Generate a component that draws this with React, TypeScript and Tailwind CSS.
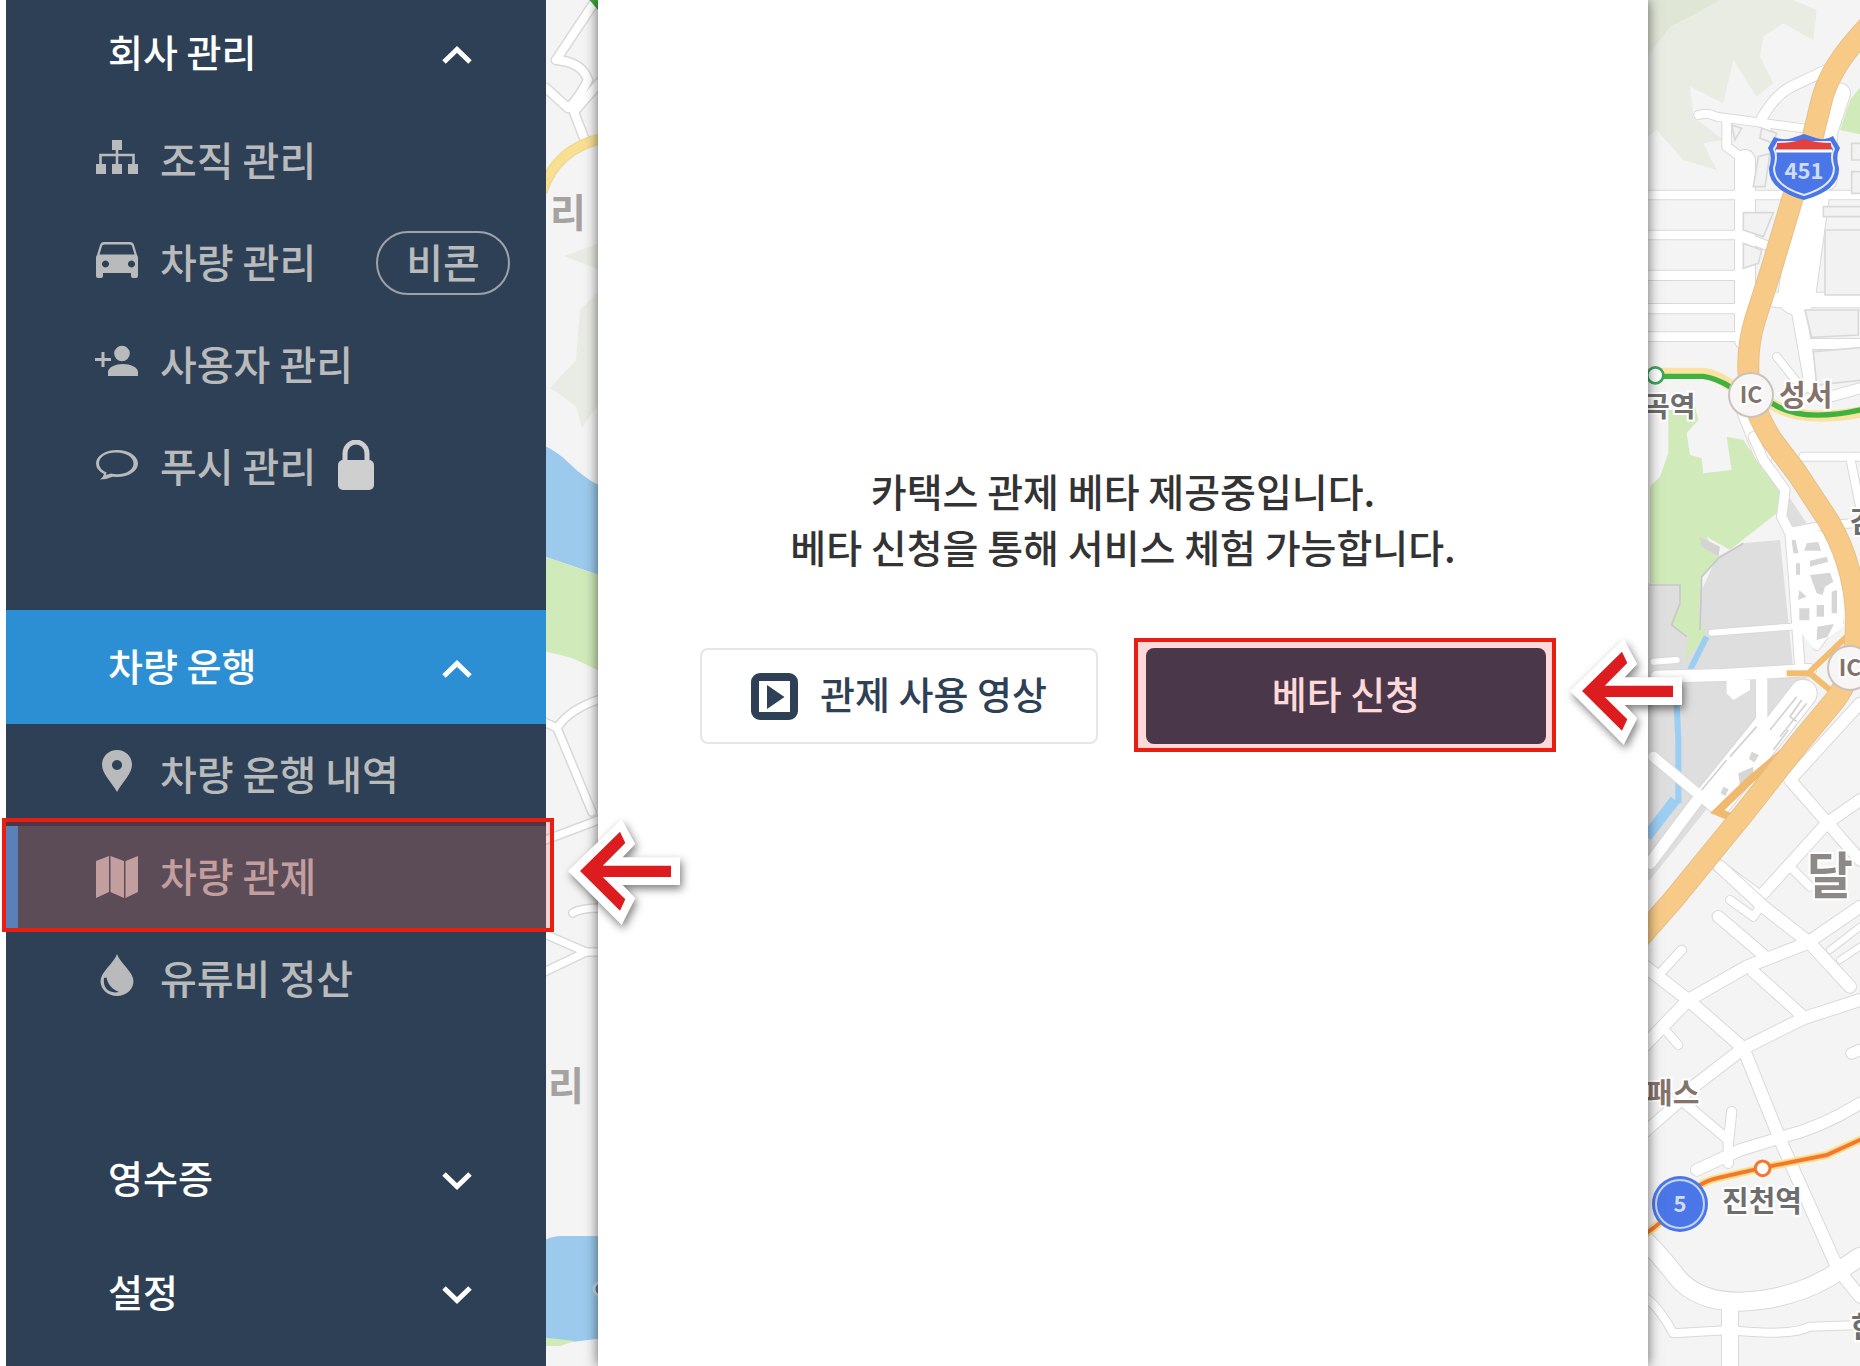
import type { ReactNode } from "react";
import clsx from "clsx";

type Road = [d: string, width: number];

function Roads({ roads, edge = 6 }: { roads: Road[]; edge?: number }) {
  return (
    <g fill="none" strokeLinecap="round" strokeLinejoin="round">
      {roads.map(([d, w]) => (
        <path key={d} d={d} stroke="#d9d9d9" strokeWidth={w + edge} />
      ))}
      {roads.map(([d, w]) => (
        <path key={d} d={d} stroke="#fff" strokeWidth={w} />
      ))}
    </g>
  );
}

const westRoads: Road[] = [
  ["M596 0 L556 60 Q582 62 588 80 Q578 100 568 108 M546 88 L568 108", 8],
  ["M600 82 L574 112 L584 138", 8],
  ["M604 698 Q570 708 557 728 L592 812", 7],
  ["M540 720 L557 728", 7],
  ["M540 842 L604 818", 7],
  ["M540 932 L586 952 L540 974", 7],
  ["M573 913 Q580 908 604 908", 7],
  ["M586 952 H604", 7],
];

const northRoads: Road[] = [
  ["M390 365 Q430 290 480 262 L600 205 L690 100", 30],
  ["M205 345 Q230 335 260 350 L520 385", 24],
  ["M290 365 V440 L345 480", 26],
  ["M345 480 V1020", 60],
  ["M40 585 H690", 26],
  ["M40 705 L330 705 L420 740", 26],
  ["M40 826 H330", 28],
  ["M40 926 H330", 28],
  ["M40 1010 H340", 26],
  ["M440 440 L395 360", 20],
  ["M630 280 L590 400 V540", 60],
  ["M540 600 L500 890", 110],
  ["M500 900 L545 1160", 40],
  ["M440 900 H690", 44],
  ["M530 1032 H690", 30],
  ["M440 1070 L520 1170", 22],
  ["M690 1165 L600 1190", 30],
  ["M330 1190 L400 1370", 50],
];

const centralRoads: Road[] = [
  ["M370 -10 L400 60 L465 150 L455 230 L480 280 L490 400 L510 690", 28],
  ["M510 270 Q600 250 690 250", 24],
  ["M520 50 H690 M660 50 L690 200", 24],
  ["M500 270 L610 400 L620 540 L560 620", 20],
  ["M245 578 L480 560 L630 545", 18],
  ["M70 665 L140 660", 18],
  ["M80 710 L280 705 L540 690", 36],
  ["M395 720 V840 L210 1070 L60 1270", 34],
  ["M520 760 L270 1080", 80],
  ["M70 950 L250 1100", 30],
  ["M690 790 L480 1020 L620 1180 L690 1260", 34],
  ["M690 1080 L590 1150 L400 1360", 34],
  ["M480 1280 L540 1340", 24],
  ["M240 1260 L390 1370", 34],
];

const southRoads: Road[] = [
  ["M270 -100 L400 20 L540 130 L660 260", 36],
  ["M390 20 L370 50 L300 0", 24],
  ["M265 50 L400 165", 34],
  ["M20 180 L175 300 L340 445 L455 730 L625 1110 L690 1190", 36],
  ["M155 150 L95 215", 26],
  ["M40 440 L175 300 L350 200 L530 130 L690 20", 36],
  ["M370 215 L520 350", 34],
  ["M110 395 L145 435", 24],
  ["M190 560 L340 445 L520 355 L690 300", 36],
  ["M665 460 L690 450", 32],
  ["M200 810 L330 750 L455 712 Q580 680 690 610", 34],
  ["M165 610 L295 720 L295 790 M305 635 L295 730", 28],
  ["M40 700 L165 590", 32],
  ["M570 110 L690 20 M600 150 L690 80 M630 180 L690 140", 18],
  ["M20 1000 Q70 1040 140 1130 Q200 1205 330 1205 Q480 1200 600 1130 L690 1070", 54],
  ["M300 1210 V1400", 48],
  ["M40 1190 Q80 1210 130 1300 L300 1290 Q480 1310 540 1280 L690 1275", 24],
];

const expressway =
  "M1872 22 L1856 40 Q1828 72 1821 103 L1812 140 L1792 200 L1772 267 L1755 320 Q1746 350 1749 380 Q1752 408 1772 440 L1797 473 L1828 520 Q1852 560 1856 610 Q1858 670 1835 700 L1800 742 L1745 812 L1673 900 L1636 942";

function CityMap() {
  return (
    <svg
      className="absolute inset-0 size-full"
      viewBox="0 0 1860 1366"
      preserveAspectRatio="xMaxYMin slice"
      fontFamily='"Noto Sans CJK KR", sans-serif'
      fontWeight="700"
    >
      <rect width="1860" height="1366" fill="#f4f4f4" />

      {/* river side */}
      <path d="M600 243 L564 256 L600 270Z M600 290 L580 310 L576 360 L550 388 L562 396 L576 406 L582 428 L600 402Z" fill="#e9ece4" />
      <path d="M540 444 Q556 450 570 464 T602 487 V576 L540 555Z" fill="#9ccaed" />
      <path d="M540 555 L602 576 V672 L572 658 L540 650Z" fill="#d0eab9" />
      <Roads roads={westRoads} edge={3} />
      <path d="M542 192 Q556 148 604 138" fill="none" stroke="#eed996" strokeWidth="11" />
      <path d="M542 192 Q556 148 604 138" fill="none" stroke="#f9df92" strokeWidth="8" />
      <path d="M590 -4 L602 10" stroke="#3ba53b" strokeWidth="6" />
      <path d="M540 1242 Q552 1236 560 1236 H604 V1338 L572 1342 L540 1338Z" fill="#9ccaed" />
      <path d="M540 1337 L575 1341 L560 1346 H540Z" fill="#d0eab9" />
      <circle cx="601" cy="1289" r="7" fill="#6e7f8f" stroke="#c5dcee" strokeWidth="3" />
      <text x="550" y="227" fontSize="39" fill="#a5a2a0">리</text>
      <text x="548" y="1100" fontSize="39" fill="#a5a2a0">리</text>

      <g transform="translate(1630) scale(.33333)">
        <path d="M40 0 H490 L560 30 L550 120 L460 70 L400 110 L390 170 L430 250 L380 290 L310 180 L280 310 L180 260 L190 350 L280 420 L220 430 L260 510 L160 480 L80 390 L40 420Z" fill="#e8ece3" />
        <path d="M40 0 H270 L180 50 L120 80 L60 160 H40Z" fill="#e0e6d6" />
        <path d="M700 250 L660 300 L630 390 L700 405Z" fill="#d0eab9" />
        <Roads roads={northRoads} />
        <g fill="#f2f2f2" stroke="#d9d9d9" strokeWidth="5">
          <path d="M340 638 H430 L400 710 L340 690Z M340 730 L395 750 L385 790 L340 805Z" />
          <path d="M305 375 L335 385 L315 420Z M395 385 L440 400 L430 430 L390 415Z M385 470 L420 460 L405 560 H370Z" />
          <path d="M585 690 H700 V885 H585Z M580 620 H700 V650 H580Z" />
          <path d="M665 430 H700 V480 H665Z M665 515 H700 V580 H665Z" />
          <path d="M525 930 H685 V1005 L545 1012Z M550 1055 L700 1042 V1140 L560 1155Z" />
        </g>
      </g>

      <g transform="translate(1630 440) scale(.33333)">
        <path d="M40 430 H150 L220 440 L260 350 L340 310 L450 300 L490 690 L540 720 L60 1320 H40Z" fill="#dedede" />
        <path d="M470 160 L530 250 L470 265Z" fill="#dedede" />
        <path d="M115 -90 L195 -100 L205 -60 L170 -20 L180 45 L215 55 L220 100 L305 90 L290 -10 L340 0 L400 90 L450 150 L440 220 L350 290 L300 330 L230 290 L265 360 L215 410 L205 520 L230 590 L165 660 L175 590 L120 550 L150 490 L150 435 L60 430 V140 L90 110 L115 40Z" fill="#d0eab9" />
        <path d="M60 435 H150 L150 490 L125 555 L170 590 M340 310 L265 355 L215 410 L210 570" fill="none" stroke="#c8c8c8" strokeWidth="5" />
        <path d="M208 290 L270 320 L265 350 L215 320Z" fill="#d3d3d6" />
        <path d="M230 590 L180 690" stroke="#9ccdf3" strokeWidth="18" />
        <path d="M140 790 L145 900 V1090" fill="none" stroke="#9ccdf3" strokeWidth="18" />
        <path d="M135 1080 L50 1190" fill="none" stroke="#9ccdf3" strokeWidth="32" />
        <Roads roads={centralRoads} />
        <path d="M290 720 H360 V750 L310 780 L290 760Z" fill="#fff" />
        <path d="M485 260 L600 280 L640 400 V560 L550 625 L500 560Z" fill="#fff" />
        <g fill="#d6d6d6">
          <path d="M485 300 h12 l8 40 h-15Z M530 310 l35 -4 l8 26 h-50Z M498 370 h12 v34 h-12Z M540 362 l50 -12 l5 15 l-55 15Z" />
          <path d="M540 405 L600 398 L610 425 L585 440 L578 465 L560 460Z M605 455 l16 -5 v70 h-16Z M508 450 l22 20 l-26 10Z" />
          <path d="M508 505 h30 v36 h-30Z M560 495 h22 v35 h-22Z M562 560 l50 -8 l-20 40 l-32 8Z" />
          <path d="M365 935 l22 10 l-14 22 l-16 -10Z M325 1000 l45 -20 v25 l-40 35Z M280 1040 l16 8 l-10 20 l-14 -8Z" />
        </g>
        <g fill="none" stroke="#d2d2d2" strokeWidth="5">
          <path d="M380 860 L300 950 M500 770 L420 870 M530 790 L450 890 M515 780 L480 830 L500 845" />
          <path d="M475 870 L430 930 M290 960 L215 1050" />
        </g>
        <path d="M470 700 H540 L600 750 M540 695 L650 590" fill="none" stroke="#f3bd70" strokeWidth="18" />
        <path d="M480 920 L360 1020 L262 1115 L300 1130" fill="none" stroke="#efba70" strokeWidth="24" />
      </g>

      <g transform="translate(1630 900) scale(.33333)">
        <Roads roads={southRoads} />
        <path d="M30 1010 Q70 990 120 940 Q190 850 260 835 L400 803 L590 765 L700 715" fill="none" stroke="#fbe08e" strokeWidth="24" />
        <path d="M30 1010 Q70 990 120 940 Q190 850 260 835 L400 803 L590 765 L700 715" fill="none" stroke="#f5772f" strokeWidth="12" />
        <circle cx="398" cy="805" r="22" fill="#fff" stroke="#f5772f" strokeWidth="9" />
        <circle cx="150" cy="912" r="84" fill="#4a76e8" />
        <circle cx="150" cy="912" r="72" fill="none" stroke="#c6d5fa" strokeWidth="6" />
      </g>

      {/* subway line 2 */}
      <g transform="translate(1630) scale(.33333)" fill="none">
        <path d="M70 1120 H220 Q260 1125 300 1155 L430 1215 Q520 1270 700 1235" stroke="#fae3a0" strokeWidth="34" />
        <path d="M70 1129 H220 Q260 1135 300 1160 L430 1212 Q520 1270 700 1228" stroke="#3fb23f" strokeWidth="16" />
        <circle cx="76" cy="1126" r="24" fill="#fff" stroke="#3fa45c" strokeWidth="8" />
      </g>

      {/* expressway */}
      <g fill="none" strokeLinejoin="round">
        <path d={expressway} stroke="#e6c08a" strokeWidth="22" />
        <path d={expressway} stroke="#f7cb87" strokeWidth="20" />
      </g>

      <g transform="translate(1768 134)">
        <path d="M6 3 Q16 7 24 4 L36 0 L48 4 Q57 7 65 2 L72 14 Q67 22 71 34 Q72 56 36 66 Q0 56 1 34 Q5 22 0 14Z" fill="#4a76e8" />
        <path d="M10 8 H62 L66 15 Q62 22 66 34 Q66 52 36 61 Q6 52 6 34 Q10 22 6 15Z" fill="none" stroke="#e3eafc" strokeWidth="2" />
        <path d="M9 9 Q24 9 36 5 Q48 9 63 9 V16 H9Z" fill="#e4413e" />
        <path d="M8 17 H64" stroke="#fff" strokeWidth="3" />
        <text x="36" y="45" fontSize="22" fill="#cfdcfc" textAnchor="middle">451</text>
      </g>

      <g fill="#f8f6f5" stroke="#c9c2bd" strokeWidth="2">
        <circle cx="1751" cy="395" r="22" />
        <circle cx="1850" cy="668" r="22" />
      </g>
      <g fill="#85736b" stroke="#fff" strokeWidth="4" paintOrder="stroke">
        <text x="1751" y="403" fontSize="23" textAnchor="middle">IC</text>
        <text x="1850" y="676" fontSize="23" textAnchor="middle">IC</text>
        <text x="1779" y="406" fontSize="29">성서</text>
        <text x="1646" y="1104" fontSize="29">패스</text>
        <g fill="#6e6e6e">
          <text x="1644" y="417" fontSize="28">곡역</text>
          <text x="1722" y="1212" fontSize="29">진천역</text>
          <text x="1850" y="533" fontSize="29">감</text>
          <text x="1851" y="1338" fontSize="29">한</text>
        </g>
        <text x="1807" y="894" fontSize="50" fill="#8d8987">달</text>
      </g>
      <text x="1680" y="1212" fontSize="22" fill="#cfdcfc" textAnchor="middle">5</text>
    </svg>
  );
}

function Glyph({ children }: { children: ReactNode }) {
  return (
    <svg className="size-[42px] shrink-0 overflow-visible" viewBox="0 0 42 42" fill="currentColor" aria-hidden="true">
      {children}
    </svg>
  );
}

const OrgIcon = () => (
  <Glyph>
    <path d="M16 0h10v10H16zM0 24h10v10H0zM16 24h10v10H16zM32 24h10v10H32z" />
    <path d="M21 9V25M4.5 25V15H37.5V25" fill="none" stroke="currentColor" strokeWidth="2.6" />
  </Glyph>
);

const CarIcon = () => (
  <Glyph>
    <path
      fillRule="evenodd"
      d="M8 0H34Q37 0 38 3L41 13Q42 14 42 16V34Q42 36 40 36H37Q35 36 35 34V31H7V34Q7 36 5 36H2Q0 36 0 34V16Q0 14 1 13L4 3Q5 0 8 0ZM8 2.5Q6.500 2.500 6 4L3.500 12.500H38.500L36 4Q35.500 2.500 34 2.500ZM9.500 18.500a3.500 3.500 0 1 0 .01 0ZM35.500 18.500a3.500 3.500 0 1 0 .01 0Z"
    />
  </Glyph>
);

const UserAddIcon = () => (
  <Glyph>
    <circle cx="26" cy="9.500" r="7.800" />
    <path d="M12 32V28C12 23 20 20 27 20S42 23 42 28V32ZM5.500 8H8.500V14H15V17H8.500V23H5.500V17H-1V14H5.500Z" />
  </Glyph>
);

const ChatIcon = () => (
  <Glyph>
    <path
      fillRule="evenodd"
      d="M21 4C33 4 42 10 42 17.500S33 31 21 31L16.500 30.700Q11 33.500 4 33.500Q7.500 31 8 28Q0 24 0 17.500C0 10 9 4 21 4ZM20 6.500C10 6.500 3 11 3 17.500Q3 23 10.500 26.500L10 29Q12.500 28.300 15 27.500Q18 28.200 21 28.200C31 28.200 37.500 23.500 37.500 17.500S31 6.500 20 6.500Z"
    />
  </Glyph>
);

const PinIcon = () => (
  <Glyph>
    <path
      fillRule="evenodd"
      d="M21-4C29.500-4 36 2.500 36 10.500C36 20 27 27 21 38C15 27 6 20 6 10.500C6 2.500 12.500-4 21-4ZM21 6a5 5 0 1 0 .01 0Z"
    />
  </Glyph>
);

const MapIcon = () => (
  <Glyph>
    <path d="M0 5L13 0V36L0 42ZM14.500 0L28 5V42L14.500 36ZM29.500 5L42 0V36L29.500 42Z" />
  </Glyph>
);

const DropIcon = () => (
  <Glyph>
    <path d="M21-4C24 5 37.500 14 37.500 23C37.500 31.500 30 38 21 38S4.500 31.500 4.500 23C4.500 14 18 5 21-4Z" />
    <path d="M8 20C6.500 30 13 36 23 34C17 31.500 12 27.500 10.500 19.500Z" fill="#2e4055" />
  </Glyph>
);

const LockIcon = () => (
  <svg className="h-[54px] w-9 shrink-0 text-[#cfcfcf]" viewBox="0 0 36 54" aria-hidden="true">
    <path d="M7 23V13.500A11 11.500 0 0 1 29 13.500V23" fill="none" stroke="currentColor" strokeWidth="5" />
    <rect y="20" width="36" height="30" rx="5" fill="currentColor" />
  </svg>
);

const PlayIcon = () => (
  <svg className="size-[47px] shrink-0" viewBox="0 0 47 47" aria-hidden="true">
    <rect x="4" y="4" width="39" height="39" rx="5" fill="none" stroke="currentColor" strokeWidth="8" />
    <path d="M8 8H39V39H8Z" fill="#fff" />
    <path d="M16 12L33.500 24L16 36Z" fill="currentColor" />
  </svg>
);

function Chevron({ open }: { open?: boolean }) {
  return (
    <svg
      className={clsx("mt-1 h-[18px] w-[30px]", !open && "rotate-180")}
      viewBox="0 0 30 18"
      fill="none"
      stroke="currentColor"
      strokeWidth="5"
      aria-hidden="true"
    >
      <path d="M2 16L15 3.500L28 16" />
    </svg>
  );
}

// red frame with an arrow pointing at it from the right
function Callout({ className }: { className: string }) {
  return (
    <span className={clsx("pointer-events-none absolute z-10 border-4 border-[#e81e10] bg-[#ff0000]/15", className)}>
      <svg
        className="absolute top-1/2 left-full ml-[18px] h-[106px] w-[112px] -translate-y-1/2 overflow-visible drop-shadow-[2px_4px_4px_rgba(0,0,0,0.5)]"
        viewBox="0 3 112 106"
        aria-hidden="true"
      >
        <path d="M0 52L53.700 0L67.300 25L54.700 38.300H112V66H54.700L67.300 79.300L53.700 106Z" fill="#fff" />
        <path d="M12 52L52 12.700L57.300 24L34.700 46.700H103V58H34.700L57.300 80.300L52 91.700Z" fill="#dc1c1e" />
      </svg>
    </span>
  );
}

interface MenuItem {
  label: string;
  icon: ReactNode;
  extra?: ReactNode;
  active?: boolean;
}

interface MenuSection {
  title: string;
  current?: boolean;
  items?: MenuItem[];
}

const sections: MenuSection[] = [
  {
    title: "회사 관리",
    items: [
      { label: "조직 관리", icon: <OrgIcon /> },
      {
        label: "차량 관리",
        icon: <CarIcon />,
        extra: (
          <span className="ml-auto flex h-16 w-[134px] items-center justify-center rounded-full border-2 border-[#bcbcbc]/80 pb-1">
            비콘
          </span>
        ),
      },
      { label: "사용자 관리", icon: <UserAddIcon /> },
      { label: "푸시 관리", icon: <ChatIcon />, extra: <LockIcon /> },
    ],
  },
  {
    title: "차량 운행",
    current: true,
    items: [
      { label: "차량 운행 내역", icon: <PinIcon /> },
      { label: "차량 관제", icon: <MapIcon />, active: true },
      { label: "유류비 정산", icon: <DropIcon /> },
    ],
  },
  { title: "영수증" },
  { title: "설정" },
];

function Sidebar() {
  return (
    <nav className="relative z-20 ml-1.5 w-[540px] shrink-0 bg-[#2e4055]">
      <div className="-mt-1">
        {sections.map(({ title, current, items }) => (
          <section key={title}>
            <button
              type="button"
              className={clsx(
                "flex h-[114px] w-full items-center justify-between pr-[74px] pl-[102px] text-[38px] font-medium text-white",
                current && "bg-[#2d8fd3]",
              )}
            >
              <span className="pb-1">{title}</span>
              <Chevron open={!!items} />
            </button>
            {items && (
              <ul className="mb-[92px]">
                {items.map((item) => (
                  <li key={item.label} className="relative">
                    <a
                      href="#"
                      className={clsx(
                        "flex h-[102px] items-center gap-[22px] pr-9 text-[40px] font-medium text-[#b9babb]",
                        item.active ? "border-l-12 border-[#3c96d8] bg-[#3f5967] pl-[78px]" : "pl-[90px]",
                      )}
                    >
                      {item.icon}
                      <span className="pb-1">{item.label}</span>
                      {item.extra}
                    </a>
                    {item.active && <Callout className="-top-2 -right-2 -bottom-1 -left-1" />}
                  </li>
                ))}
              </ul>
            )}
          </section>
        ))}
      </div>
    </nav>
  );
}

export default function App() {
  return (
    <div className='relative flex h-screen overflow-hidden bg-white font-["Noto_Sans_CJK_KR",sans-serif] leading-none'>
      <div className="absolute inset-y-0 right-0 left-1.5">
        <CityMap />
      </div>
      <Sidebar />
      <main className="relative z-10 mr-[212px] ml-[52px] flex-1 bg-white pt-[462px] shadow-[0_0_12px_rgba(0,0,0,0.6)]">
        <p className="text-center text-[39px] leading-[56px] font-medium text-[#333]">
          카택스 관제 베타 제공중입니다.
          <br />
          베타 신청을 통해 서비스 체험 가능합니다.
        </p>
        <div className="mt-[74px] flex justify-center gap-12 text-[38px] font-medium">
          <button
            type="button"
            className="flex h-24 w-[398px] items-center justify-center gap-[22px] rounded-lg border-2 border-[#e6e6e6] bg-white text-[#2e4055]"
          >
            <PlayIcon />
            <span className="pb-1.5">관제 사용 영상</span>
          </button>
          <div className="relative">
            <button type="button" className="h-24 w-[400px] rounded-lg bg-[#2a4257] pb-1.5 text-white">
              베타 신청
            </button>
            <Callout className="-top-2.5 -right-2.5 -bottom-2 -left-3" />
          </div>
        </div>
      </main>
    </div>
  );
}
